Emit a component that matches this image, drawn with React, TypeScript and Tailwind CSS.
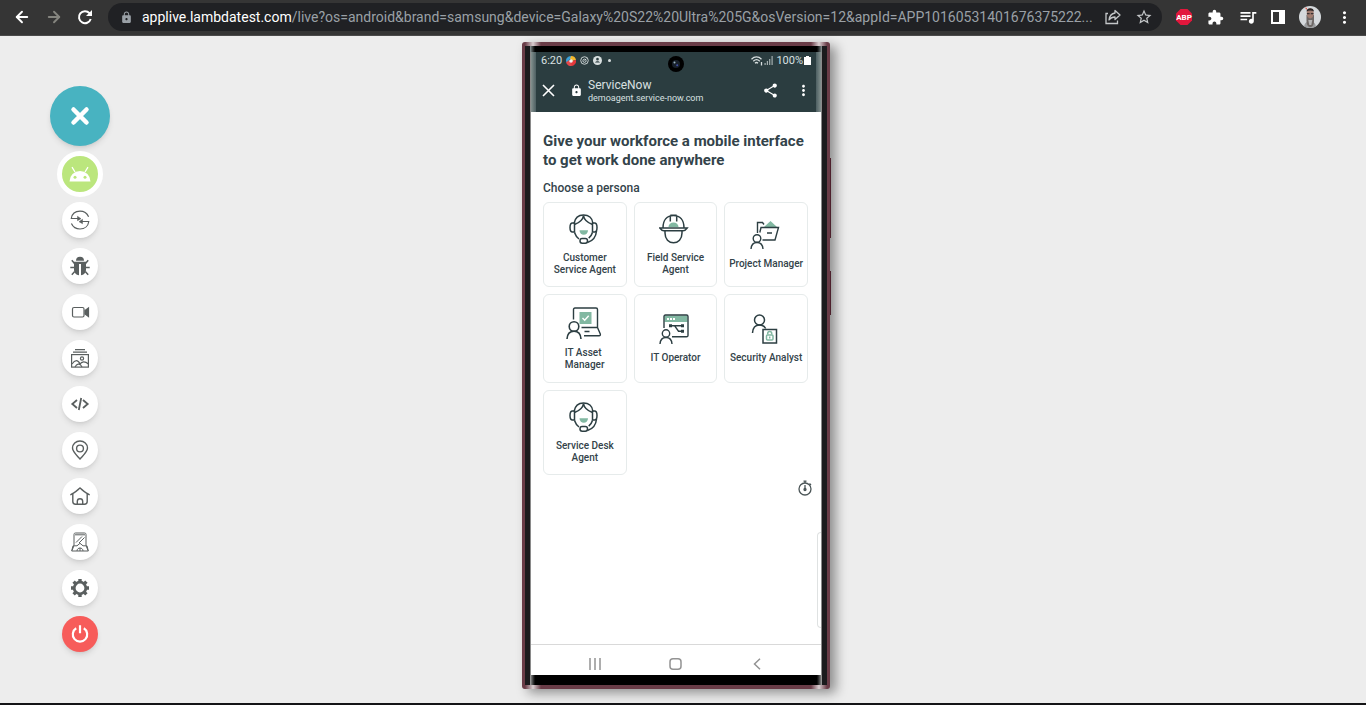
import type { ReactNode } from "react";
import { ArrowLeft, ArrowRight } from "lucide-react";
import {
  MdExtension,
  MdLock,
  MdMoreVert,
  MdQueueMusic,
  MdShare,
  MdStarOutline,
} from "react-icons/md";

const DARK = "#2c3e42";
const MINT = "#82b8a2";

const URL_PATH =
  "/live?os=android&brand=samsung&device=Galaxy%20S22%20Ultra%205G&osVersion=12&appId=APP10160531401676375222...";

function ReloadIcon() {
  return (
    <svg width="16" height="16" viewBox="0 0 16 16" fill="none" stroke="#fff" strokeWidth="2">
      <path d="M13.700 10A6 6 0 1 1 12.500 4.200L14 5.800" />
      <path d="M15 1v6H9z" fill="#fff" stroke="none" />
    </svg>
  );
}

function ShareArrow() {
  return (
    <svg width="16" height="16" viewBox="0 0 16 16" fill="none" stroke="currentColor" strokeWidth="1.3">
      <path d="M3 4.500H1v10h11.500V11.500" />
      <path d="M10 1.500L15 6l-5 4.500V8C7.500 8 5.500 8.800 4 11 4.500 7 6.500 4.500 10 4z" strokeLinejoin="round" />
    </svg>
  );
}

function Avatar() {
  return (
    <svg width="22" height="22" viewBox="0 0 22 22">
      <defs>
        <clipPath id="avatar">
          <circle cx="11" cy="11" r="11" />
        </clipPath>
      </defs>
      <g clipPath="url(#avatar)">
        <rect width="22" height="22" fill="#d5d9dc" />
        <path d="M5 22c0-5 3-7 6-7s6 2 6 7z" fill="#9a9c9e" />
        <path d="M7.500 9h7.500v6c0 4-1.500 6-3.700 6s-3.800-2-3.800-6z" fill="#6d6765" />
        <ellipse cx="11.200" cy="7.500" rx="3.500" ry="5" fill="#a07c70" />
        <path d="M7.500 5.500c0-4.500 7.500-4.500 7.500 0-2-1.500-5.500-1.500-7.500 0z" fill="#2b2526" />
        <path d="M8 7h2.600v1.200H8zM11.800 7h2.600v1.200h-2.600z" fill="#3a3233" />
        <path d="M9.300 14h4l-1 5h-2z" fill="#b5b5b5" />
        <path d="M6 1.500l2 .5-.5 2z" fill="#e34b3c" />
      </g>
    </svg>
  );
}

function BrowserBar() {
  return (
    <header className="flex h-9 items-center border-b border-[#4a4a4a] bg-[#353535] pb-px text-white">
      <nav className="flex w-[108px] shrink-0 items-center gap-[14px] pl-[13px]">
        <button aria-label="Back"><ArrowLeft size={18} strokeWidth={2.5} /></button>
        <button aria-label="Forward" className="text-[#85857f]"><ArrowRight size={18} strokeWidth={2.5} /></button>
        <button aria-label="Reload"><ReloadIcon /></button>
      </nav>
      <div className="flex h-7 min-w-0 flex-1 items-center rounded-full bg-[#202124] pr-[9px] pl-3 text-[#9aa0a6]">
        <MdLock size={13} className="shrink-0" />
        <p className="ml-[9px] min-w-0 flex-1 overflow-hidden font-[Roboto,sans-serif] text-[14px] leading-5 whitespace-nowrap">
          <span className="text-white">applive.lambdatest.com</span>
          {URL_PATH}
        </p>
        <div className="flex shrink-0 items-center gap-[14px] text-[#c4c7c9]">
          <button aria-label="Share"><ShareArrow /></button>
          <button aria-label="Bookmark"><MdStarOutline size={18} /></button>
        </div>
      </div>
      <div className="flex w-[204px] shrink-0 items-center justify-between pr-3 pl-[13px]">
        <button aria-label="Ad blocker">
          <svg width="18" height="18" viewBox="0 0 18 18">
            <path d="M5.500 1h7L17 5.500v7L12.500 17h-7L1 12.500v-7z" fill="#e2173c" />
            <text x="9" y="12" textAnchor="middle" fontSize="8" fontWeight="700" fill="#fff" fontFamily="Roboto, sans-serif">ABP</text>
          </svg>
        </button>
        <button aria-label="Extensions"><MdExtension size={17} /></button>
        <button aria-label="Media"><MdQueueMusic size={20} /></button>
        <button aria-label="Side panel">
          <svg width="14" height="14" viewBox="0 0 14 14"><path d="M0 0h14v14H0zM2 2v10h6V2z" fill="#fff" fillRule="evenodd" /></svg>
        </button>
        <button aria-label="Profile"><Avatar /></button>
        <button aria-label="Menu"><MdMoreVert size={19} /></button>
      </div>
    </header>
  );
}

/* Toolbar icons, all drawn on a 20px grid */
function ToolIcon({ children }: { children: ReactNode }) {
  return (
    <svg width="20" height="20" viewBox="0 0 20 20" fill="none" stroke="#5a5f5f" strokeWidth="1.200">
      {children}
    </svg>
  );
}

const TOOLS: { label: string; icon: ReactNode }[] = [
  {
    label: "Switch",
    icon: (
      <>
        <path d="M1.300 8.500C2 4 5.500 1.200 10 1.200c3.800 0 7 2 8.600 5.500" />
        <path d="M18.800 11.500c-.6 4.300-4 7.500-8.800 7.500-3.800 0-7-2-8.600-5.500" />
        <path d="M.8 8.500h8M19.200 11.500h-8" />
        <path d="M7.500 6.300l3.500 2.400-3.500 2zM12.500 9.300L9 11.700l3.500 2z" fill="#5a5f5f" strokeWidth=".5" />
      </>
    ),
  },
  {
    label: "Report bug",
    icon: (
      <>
        <path d="M6 4.800a4 4 0 0 1 8 0z" fill="#5a5f5f" stroke="none" />
        <path d="M4 5.800h12v8c0 3-2.300 5.200-5 5.400V8H9v11.200c-2.700-.2-5-2.400-5-5.400z" fill="#5a5f5f" stroke="none" />
        <path d="M4.500 7.500L1.800 4.200M15.500 7.500l2.700-3.300M4 11.500H.3M16 11.500h3.700M4.700 15.500l-2.900 3.300M15.300 15.500l2.900 3.300" strokeWidth="1.500" />
      </>
    ),
  },
  {
    label: "Record",
    icon: (
      <>
        <rect x="2.500" y="5.500" width="11.500" height="9.500" rx="1.500" />
        <path d="M15 8.500l3.500-2.500v8.500L15 12z" fill="#5a5f5f" />
      </>
    ),
  },
  {
    label: "Gallery",
    icon: (
      <>
        <path d="M5 1.600h10M3 4.200h14" />
        <rect x="1.600" y="6.600" width="16.800" height="12.500" />
        <circle cx="12" cy="10.500" r="1.600" />
        <path d="M2 16c3-4.500 6-4.500 8 0l2 3M9.500 16.500c2.500-3.500 5.500-3.500 9-.5M5 19c2-3.500 4.500-3.500 5.500-2" />
      </>
    ),
  },
  {
    label: "Dev tools",
    icon: <path d="M7 6L2.300 10 7 14M13 6l4.700 4-4.700 4M11.200 4L8.800 16" strokeWidth="1.800" />,
  },
  {
    label: "Location",
    icon: (
      <>
        <path d="M10 19c-4-4.500-7.500-7.500-7.500-11a7.500 7 0 0 1 15 0c0 3.500-3.500 6.500-7.500 11z" strokeWidth="1.400" />
        <circle cx="10" cy="8.500" r="3.400" strokeWidth="1.400" />
      </>
    ),
  },
  {
    label: "Home",
    icon: (
      <>
        <path d="M.3 8.800C4 7.500 7 4.500 10 2c3 2.500 6 5.500 9.700 6.800" strokeWidth="1.400" />
        <path d="M2.800 8v7.500c0 2 1 2.700 2.700 2.700h9c1.700 0 2.700-.7 2.700-2.700V8M7.300 18v-2.500a2.700 2.700 0 0 1 5.400 0V18" strokeWidth="1.400" />
      </>
    ),
  },
  {
    label: "Rotate",
    icon: (
      <>
        <path d="M4 13V2.500c0-1 .5-1.500 1.500-1.500h9c1 0 1.500.5 1.500 1.500V13M5 2.800h10M3 13.800h4l3-2.500 3 2.500h4L18.300 19H1.700z" strokeWidth="1" />
        <path d="M6 10.500l6-6M9 11l5.500-5.500M7 19c0-4 6-4 6 0M10 16v3M4 13.500l-2 5M16 13.500l2 5" strokeWidth="1" />
      </>
    ),
  },
  {
    label: "Settings",
    icon: (
      <>
        <circle cx="10" cy="10" r="5.800" strokeWidth="2.800" />
        <path d="M10 1v3M10 16v3M1 10h3M16 10h3M3.600 3.600l2 2M14.400 14.400l2 2M3.600 16.400l2-2M14.400 5.600l2-2" strokeWidth="3.400" />
      </>
    ),
  },
];

function Toolbar() {
  return (
    <aside className="flex flex-col items-center justify-self-end pt-[50px]">
      <button aria-label="Close toolbar" className="flex size-[60px] items-center justify-center rounded-full bg-[#48b3c1] shadow-md">
        <svg width="20" height="20" viewBox="0 0 20 20">
          <path d="M3.500 3.500l13 13M16.500 3.500l-13 13" stroke="#fff" strokeWidth="4.500" strokeLinecap="round" />
        </svg>
      </button>
      <button aria-label="Android" className="my-[5px] flex size-[46px] items-center justify-center rounded-full border-[5px] border-white bg-[#bbe67d] text-white">
        <svg width="22" height="16" viewBox="0 0 22 16">
          <path d="M.5 15.500a10.500 10.500 0 0 1 21 0z" fill="#fff" />
          <path d="M6 6L3 1.200M16 6l3-4.800" stroke="#fff" strokeWidth="1.300" />
          <circle cx="6" cy="11.200" r="1.500" fill="#bbe67d" />
          <circle cx="16" cy="11.200" r="1.500" fill="#bbe67d" />
        </svg>
      </button>
      <div className="flex flex-col gap-[10px]">
        {TOOLS.map((tool) => (
          <button key={tool.label} aria-label={tool.label} className="flex size-9 items-center justify-center rounded-full bg-white shadow-md">
            <ToolIcon>{tool.icon}</ToolIcon>
          </button>
        ))}
        <button aria-label="End session" className="flex size-9 items-center justify-center rounded-full bg-[#f75c5a] shadow-md">
          <svg width="20" height="20" viewBox="0 0 20 20" fill="none" stroke="#fff" strokeWidth="2.200">
            <path d="M6.200 4.300a7.200 7.200 0 1 0 7.600 0M10 1.300v8" />
          </svg>
        </button>
      </div>
    </aside>
  );
}

function HeadsetIcon() {
  return (
    <svg width="32" height="30" viewBox="0 0 32 30" fill="none" stroke={DARK} strokeWidth="1.500">
      <path d="M5 9.500C6 4 9.500 1 14.500 1S23.500 4 24 9.500" />
      <path d="M14.500 1.500c-.5 4-3.500 7-9 9M14.500 1.500c.5 4 3.500 7 9 9" />
      <path d="M5.500 9H3.500C2 9 1 10.500 1 13.500S2 18 3.500 18h2zM23.500 9h2c1.500 0 2.500 1.500 2.500 4.500S27 18 25.500 18h-2z" />
      <path d="M5.500 18.500c1 3 2.500 5 4.500 6.500M23.500 18.500c-.8 2.500-2 4.200-3.800 5.700M27.500 17c-.5 6-4 10-9 11.500" />
      <rect x="11" y="24.500" width="7.500" height="4.700" rx="2.200" />
      <path d="M10.500 16.300h8.500a4.200 4.500 0 0 1-8.500 0z" fill={MINT} stroke="none" />
    </svg>
  );
}

function HelmetIcon() {
  return (
    <svg width="32" height="30" viewBox="0 0 32 30" fill="none" stroke={DARK} strokeWidth="1.500">
      <path d="M4 14C4 6 8 1.500 14.500 1.500S25 6 25 14M11.300 2v5.500M17.700 2v5.500M11.300 1.200h6.400" />
      <path d="M.8 14h27.400c-1.500 2-2.500 2.800-4 2.800H4.800c-1.500 0-2.500-.8-4-2.800z" />
      <path d="M6 17v2c0 6 3.800 9.800 8.500 9.800S23 25 23 19v-2" />
      <path d="M9.500 13a5 4.500 0 0 1 10 0z" fill={MINT} stroke="none" />
    </svg>
  );
}

function FolderIcon() {
  return (
    <svg width="32" height="30" viewBox="0 0 32 30" fill="none" stroke={DARK} strokeWidth="1.400">
      <path d="M14 7L20.500 1 27 7z" fill={MINT} stroke="none" />
      <path d="M7.500 13V2.500h5l1.500 2M12.500 20H25L28.500 7.500H11l-1.200 5M17 13h5" />
      <circle cx="7" cy="18.500" r="3.800" />
      <path d="M1 29c.3-4 2.500-6.500 6-6.500s5.700 2.500 6 6.500" />
    </svg>
  );
}

function LaptopIcon() {
  return (
    <svg width="38" height="32" viewBox="0 0 38 32" fill="none" stroke={DARK} strokeWidth="1.400">
      <path d="M7.500 12.500V2.500c0-1 .5-1.500 1.500-1.500h21c1 0 1.500.5 1.500 1.500v18H15.500M31.500 20.500l2.800 6.500c.3 1.200-.2 1.800-1.200 1.800H18M18.500 24.500h5" />
      <rect x="13.500" y="5" width="12" height="12" fill={MINT} stroke="none" />
      <path d="M16.500 11l2.200 2.300 4-4.500" stroke="#fff" />
      <circle cx="8" cy="19.500" r="4.800" strokeWidth="1.600" />
      <path d="M1 32c.3-5 3-7.700 7-7.700s6.700 2.700 7 7.700" strokeWidth="1.600" />
    </svg>
  );
}

function WindowIcon() {
  return (
    <svg width="32" height="30" viewBox="0 0 32 30" fill="none" stroke={DARK} strokeWidth="1.400">
      <rect x="5.500" y="1.500" width="23" height="6.500" fill={MINT} stroke="none" />
      <path d="M5 14V2.500C5 1.500 5.500 1 6.500 1h21c1 0 1.500.5 1.500 1.500v19c0 .8-.5 1.300-1.500 1.300H13" />
      <path d="M8 5h8" stroke="#fff" strokeWidth="2" strokeDasharray="2 1" />
      <path d="M11 11.700h12M15.500 11.700l4 5.500H23" />
      <path d="M10 10.200h3v3h-3zM22 10.200h3v3h-3zM22 15.700h3v3h-3z" fill={DARK} stroke="none" />
      <circle cx="7" cy="19.500" r="3.700" />
      <path d="M1 30c.3-4.500 2.500-6.500 6-6.500s5.700 2 6 6.500" />
    </svg>
  );
}

function SecurityIcon() {
  return (
    <svg width="30" height="30" viewBox="0 0 30 30" fill="none" stroke={DARK} strokeWidth="1.500">
      <circle cx="8.500" cy="6" r="5" />
      <path d="M1.500 19c.3-5.500 3-8 7-8 3 0 5 1.200 6.200 3.500" />
      <rect x="12" y="15.500" width="13.500" height="13.500" />
      <rect x="15.500" y="21" width="6.500" height="5" rx="1" stroke={MINT} />
      <path d="M16.700 20.500v-1a2 2 0 0 1 4 0v1M18.700 22.500v2" stroke={MINT} />
    </svg>
  );
}

const PERSONAS: { name: string; icon: ReactNode; left?: boolean }[] = [
  { name: "Customer Service Agent", icon: <HeadsetIcon /> },
  { name: "Field Service Agent", icon: <HelmetIcon /> },
  { name: "Project Manager", icon: <FolderIcon /> },
  { name: "IT Asset Manager", icon: <LaptopIcon />, left: true },
  { name: "IT Operator", icon: <WindowIcon /> },
  { name: "Security Analyst", icon: <SecurityIcon /> },
  { name: "Service Desk Agent", icon: <HeadsetIcon /> },
];

function PhoneHeader() {
  return (
    <div className="relative bg-[#2b3d40] text-[#d9e0e0]">
      {/* Curved glass reflections on both edges */}
      <span className="absolute inset-y-0 left-0 w-[5px] bg-linear-to-r from-[#84918f] to-[#4d5f62]" />
      <span className="absolute inset-y-0 right-0 w-[5px] bg-linear-to-l from-[#84918f] to-[#4d5f62]" />
      <div className="flex h-[17px] items-center justify-between px-[10px] text-[11px] leading-none">
        <div className="flex items-center gap-1">
          <span>6:20</span>
          <svg width="10" height="10" viewBox="0 0 10 10">
            <path d="M5 0a5 5 0 0 1 5 4L6 5 3 2z" fill="#f5b92e" />
            <path d="M10 4a5 5 0 0 1-4 6L4 7l2-2z" fill="#e5383b" />
            <path d="M6 10a5 5 0 0 1-6-4l3-2 2 3z" fill="#e5484b" />
            <path d="M0 6a5 5 0 0 1 5-6L4 3 2 5z" fill="#3aa0d8" />
            <circle cx="5" cy="5" r="1.800" fill="#f4f4f4" />
          </svg>
          <svg width="9" height="9" viewBox="0 0 10 10" fill="none" stroke="currentColor">
            <circle cx="5" cy="5" r="4.200" />
            <circle cx="5" cy="5.300" r="1.800" />
            <path d="M5 5l2-2" />
          </svg>
          <svg width="9" height="9" viewBox="0 0 10 10">
            <circle cx="5" cy="5" r="5" fill="currentColor" />
            <path d="M3.500 3.500a1.500 1.500 0 1 1 3 0 1.500 1.500 0 0 1-3 0zM2.200 7.300c1-1.800 4.600-1.800 5.600 0z" fill="#2b3d40" />
          </svg>
          <span className="ml-[2px] size-[3px] rounded-full bg-current" />
        </div>
        <div className="flex items-center gap-px">
          <svg width="12" height="10" viewBox="0 0 12 10" fill="none" stroke="currentColor" strokeWidth="1.300">
            <path d="M.5 3.200c3-3 7-3 10 0M2.300 5.300c2-2 4.500-2 6.500 0M4 7.300c1-1 2-1 3 0M10.500 6v3.500" />
          </svg>
          <svg width="10" height="9" viewBox="0 0 9 9" fill="currentColor">
            <path d="M0 7h1.200v2H0zM2.300 5h1.200v4H2.300zM4.600 3h1.200v6H4.600zM7 0h1.200v9H7z" opacity=".7" />
          </svg>
          <span className="ml-px">100%</span>
          <svg width="7" height="9" viewBox="0 0 7 9"><path d="M2 0h3v1h2v8H0V1h2z" fill="#fff" /></svg>
        </div>
      </div>
      <div className="flex h-[43px] items-center pr-[9px] pl-[11px]">
        <button aria-label="Close page">
          <svg width="13" height="13" viewBox="0 0 13 13"><path d="M1 1l11 11M12 1L1 12" stroke="#fff" strokeWidth="1.600" /></svg>
        </button>
        <MdLock size={13} className="ml-[15px]" color="#fff" />
        <div className="ml-[5px] flex-1">
          <p className="text-[12px] leading-[14px]">ServiceNow</p>
          <p className="text-[9px] leading-3">demoagent.service-now.com</p>
        </div>
        <button aria-label="Share page"><MdShare size={17} color="#fff" /></button>
        <button aria-label="More" className="ml-4"><MdMoreVert size={17} color="#fff" /></button>
      </div>
      {/* Front camera */}
      <span className="absolute top-1 left-1/2 flex size-4 -translate-x-1/2 items-center justify-center rounded-full bg-black">
        <svg width="8" height="8" viewBox="0 0 8 8">
          <circle cx="4" cy="4" r="4" fill="#18202a" />
          <circle cx="2.500" cy="2.500" r="1" fill="#9eb6c4" />
          <circle cx="5.200" cy="5.300" r="1" fill="#4350a8" />
        </svg>
      </span>
    </div>
  );
}

function Phone() {
  return (
    <section className="relative mt-[6px] w-[308px] rounded-[3px] border-x-[3px] border-y-4 border-[#693c47] bg-[#1b1b1d] shadow-[6px_4px_12px_rgba(0,0,0,0.4)]">
      {/* Side keys */}
      <span className="absolute top-[112px] -right-1 h-20 w-px bg-[#4d202c]" />
      <span className="absolute top-[225px] -right-1 h-11 w-px bg-[#4d202c]" />
      {/* Highlights where the metal rim bends */}
      <span className="absolute -top-1 left-0 h-1 w-4 bg-linear-to-r from-transparent via-white/75 to-transparent" />
      <span className="absolute -top-1 right-0 h-1 w-4 bg-linear-to-r from-transparent via-white/75 to-transparent" />
      <span className="absolute -bottom-1 left-0 h-1 w-4 bg-linear-to-r from-transparent via-white/75 to-transparent" />
      <span className="absolute right-0 -bottom-1 h-1 w-4 bg-linear-to-r from-transparent via-white/75 to-transparent" />
      <div className="flex min-h-[639px] flex-col px-[5px] font-[Roboto,sans-serif]">
        <div className="flex h-[6px] justify-between bg-black">
          <span className="w-[6px] bg-linear-to-r from-[#8d9798] to-black" />
          <span className="w-[6px] bg-linear-to-l from-[#8d9798] to-black" />
        </div>
        <div className="flex flex-1 flex-col border-x border-[#8a8a8a]">
          <PhoneHeader />
          <div className="relative flex flex-1 flex-col bg-white pt-5 pr-[13px] pl-3 text-[#33434a]">
            <h1 className="text-[15px] leading-[19px] font-bold">
              Give your workforce a mobile interface
              <br />
              to get work done anywhere
            </h1>
            <h2 className="mt-[10px] text-[12px] leading-4 font-medium">Choose a persona</h2>
            <div className="mt-[6px] grid grid-cols-3 grid-rows-[85px_89px_85px] gap-[7px]">
              {PERSONAS.map((p) => (
                <button key={p.name} className="flex flex-col items-center justify-center gap-2 rounded-md border border-[#e6ebeb]">
                  {p.icon}
                  <span className={`max-w-[76px] text-[10px] leading-3 font-medium ${p.left ? "w-10 text-left" : ""}`}>{p.name}</span>
                </button>
              ))}
            </div>
            <button aria-label="Timer" className="mt-[5px] -mr-1 self-end">
              <svg width="14" height="16" viewBox="0 0 14 16" fill="none" stroke="#4b5557" strokeWidth="1.300">
                <circle cx="7" cy="9" r="6" />
                <path d="M7 1v2M5.500 1.200h3M7 5v5M11.500 3.500l1.500 1.500" />
                <circle cx="7" cy="9.500" r="1" fill="#4b5557" />
              </svg>
            </button>
            {/* Edge panel handle */}
            <span className="absolute right-0 bottom-4 h-24 w-1 rounded-l border border-r-0 border-[#dfe2e2]" />
          </div>
          <nav className="grid h-[31px] grid-cols-3 items-center justify-items-center border-t border-[#d9d9d9] bg-white px-[23px] pt-2">
            <button aria-label="Recents">
              <svg width="14" height="12" viewBox="0 0 14 12"><path d="M2 0v12M7 0v12M12 0v12" stroke="#939393" strokeWidth="1.500" /></svg>
            </button>
            <button aria-label="Home screen">
              <svg width="13" height="12" viewBox="0 0 13 12" fill="none"><rect x="1" y=".8" width="11" height="10.400" rx="3" stroke="#939393" strokeWidth="1.500" /></svg>
            </button>
            <button aria-label="Go back">
              <svg width="8" height="12" viewBox="0 0 8 12" fill="none"><path d="M7 .7L1.500 6 7 11.300" stroke="#939393" strokeWidth="1.500" /></svg>
            </button>
          </nav>
        </div>
        <div className="flex h-[10px] justify-between bg-black">
          <span className="w-[6px] bg-linear-to-r from-[#a5a5a5] to-black" />
          <span className="w-[6px] bg-linear-to-l from-[#a5a5a5] to-black" />
        </div>
      </div>
    </section>
  );
}

export default function App() {
  return (
    <div className="flex min-h-screen flex-col bg-[#ededed]">
      <BrowserBar />
      <main className="grid flex-1 grid-cols-[110px_1fr_124px] items-start">
        <Toolbar />
        <div className="flex justify-center">
          <Phone />
        </div>
      </main>
      <div className="h-[2px] bg-[#141416]" />
    </div>
  );
}
